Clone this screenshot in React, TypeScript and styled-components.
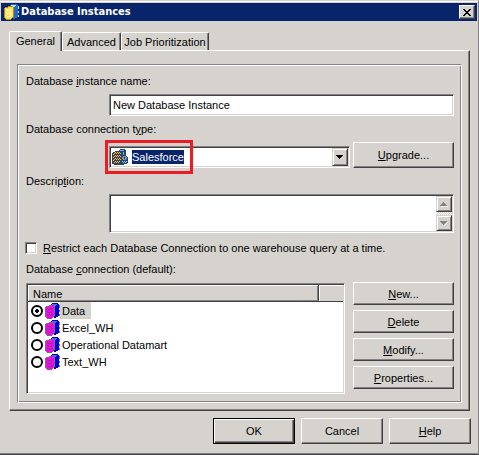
import React, { useState } from "react";
import styled, { createGlobalStyle, css } from "styled-components";

const face = "#d6d3ce";
const grey = "#848284";
const dark = "#424142";
const navy = "#08246b";

const GlobalStyle = createGlobalStyle`
  *, *::before, *::after { box-sizing: border-box; }
  body { margin: 0; background: ${face}; }
  body, button, input, select, textarea {
    font-family: "Liberation Sans", Arial, sans-serif;
    font-size: 11px;
    line-height: 16px;
    color: #000;
  }
`;

const sunken = css`
  border: 1px solid;
  border-color: ${grey} #fff #fff ${grey};
  box-shadow: inset 1px 1px ${dark}, inset -1px -1px ${face};
`;

const raised = css`
  border: 1px solid;
  border-color: #fff ${dark} ${dark} #fff;
  box-shadow: inset -1px -1px ${grey};
  background: ${face};
`;

const Window = styled.main`
  min-height: 100vh;
  display: flex;
  flex-direction: column;
  background: ${face};
  border: solid;
  border-width: 1px 1px 1px 0;
  border-color: ${face} ${grey} ${dark} ${face};
  box-shadow: inset 0 1px #fff, inset 0 -1px ${grey};
  padding: 2px 1px 9px 1px;
`;

const TitleBar = styled.header`
  display: flex;
  align-items: center;
  gap: 2px;
  height: 18px;
  padding: 0 2px 0 3px;
  background: ${navy};
  color: #fff;
`;

const Title = styled.h1`
  flex: 1;
  margin: 0;
  font: bold 11px/16px "DejaVu Sans Condensed", "DejaVu Sans", sans-serif;
`;

const CloseButton = styled.button`
  ${raised}
  display: grid;
  place-items: center;
  width: 16px;
  height: 14px;
  padding: 0;
`;

const Body = styled.div`
  flex: 1;
  display: flex;
  flex-direction: column;
  padding: 10px 6px 0 8px;
`;

const TabStrip = styled.div`
  display: flex;
  align-items: flex-end;
  height: 19px;
`;

const Tab = styled.button<{ $active: boolean; $width: number }>`
  position: relative;
  width: ${(p) => p.$width}px;
  height: ${(p) => (p.$active ? 20 : 18)}px;
  margin-bottom: ${(p) => (p.$active ? -1 : 0)}px;
  z-index: ${(p) => (p.$active ? 1 : 0)};
  padding: ${(p) => (p.$active ? "0 0 2px" : "0")};
  background: ${face};
  border: solid;
  border-width: 1px 1px 0 1px;
  border-color: #fff ${dark} #fff #fff;
  border-radius: 2px 2px 0 0;
  box-shadow: inset -1px 0 ${grey};
  white-space: nowrap;
`;

const TabPanel = styled.section`
  margin-right: 1px;
  padding: 13px 7px 7px;
  border: 1px solid;
  border-color: #fff ${dark} ${dark} #fff;
  box-shadow: inset -1px -1px ${grey};
`;

const Group = styled.form`
  display: flex;
  flex-direction: column;
  gap: 5px;
  padding: 8px 7px 8px 8px;
  border: 1px solid;
  border-color: ${grey} #fff #fff ${grey};
  box-shadow: inset 1px 1px #fff, inset -1px -1px ${grey};
`;

const Label = styled.label`
  height: 16px;
  white-space: nowrap;
`;

const Indented = styled.div`
  display: flex;
  align-items: flex-end;
  gap: 3px;
  padding-left: 83px;
`;

const TextInput = styled.input`
  ${sunken}
  flex: 1;
  min-width: 0;
  height: 22px;
  padding: 0 3px;
  outline: none;
`;

const Combo = styled.div`
  ${sunken}
  position: relative;
  flex: 1;
  display: flex;
  align-items: center;
  gap: 3px;
  height: 22px;
  padding: 1px 1px 1px 2px;
  background: #fff;
`;

const ComboSelect = styled.select`
  appearance: none;
  field-sizing: content;
  height: 14px;
  padding: 0;
  border: 0;
  border-radius: 0;
  outline: none;
  background: ${navy};
  color: #fff;
  line-height: 14px;
`;

const ArrowBox = styled.span`
  ${raised}
  display: grid;
  place-items: center;
  width: 16px;
  height: 18px;
  margin-left: auto;
  border-color: ${face} ${dark} ${dark} ${face};
  box-shadow: inset 1px 1px #fff, inset -1px -1px ${grey};
`;

const Highlight = styled.div`
  position: absolute;
  left: -5px;
  top: -7px;
  width: 88px;
  height: 34px;
  border: 3px solid #ed1c24;
  pointer-events: none;
`;

const Button = styled.button<{ $tall?: boolean; $default?: boolean }>`
  ${raised}
  width: ${(p) => (p.$default !== undefined ? 82 : 101)}px;
  height: ${(p) => (p.$tall ? 26 : 23)}px;
  padding: 0;
  ${(p) =>
    p.$default &&
    css`
      border-color: #000;
      box-shadow: inset 1px 1px #fff, inset -1px -1px ${dark}, inset -2px -2px ${grey};
    `}
`;

const Memo = styled.div`
  ${sunken}
  flex: 1;
  display: flex;
  height: 39px;
  padding: 1px;
  background: #fff;
`;

const MemoText = styled.textarea`
  flex: 1;
  min-width: 0;
  padding: 1px 2px;
  border: 0;
  outline: none;
  resize: none;
  overflow: hidden;
  background: transparent;
`;

const ScrollTrack = styled.div`
  display: flex;
  flex-direction: column;
  justify-content: space-between;
  width: 16px;
  background: repeating-conic-gradient(#fff 0 25%, ${face} 0 50%) 0 0 / 2px 2px;
`;

const ScrollButton = styled.button`
  ${raised}
  display: grid;
  place-items: center;
  width: 16px;
  height: 16px;
  padding: 0;
  border-color: ${face} ${dark} ${dark} ${face};
  box-shadow: inset 1px 1px #fff, inset -1px -1px ${grey};
`;

const CheckRow = styled.div`
  display: flex;
  align-items: center;
  gap: 6px;
  height: 16px;
  margin: 2px 0 0 -1px;
`;

const CheckBox = styled.input`
  ${sunken}
  appearance: none;
  width: 12px;
  height: 12px;
  margin: 0;
  background: #fff;
  &:checked {
    background: radial-gradient(#000 3px, #fff 3px);
  }
`;

const ListRow = styled.div`
  display: flex;
  gap: 8px;
`;

const ListFrame = styled.div`
  ${sunken}
  flex: 1;
  height: 111px;
  margin-top: 1px;
  padding: 1px;
  background: #fff;
`;

const List = styled.table`
  width: 100%;
  border-collapse: separate;
  border-spacing: 0;
  table-layout: fixed;
`;

const HeadCell = styled.th<{ $width?: number }>`
  width: ${(p) => (p.$width ? p.$width + "px" : "auto")};
  height: 17px;
  padding: 1px 0 0 5px;
  background: ${face};
  box-shadow: ${(p) =>
    p.$width
      ? `inset 0 -1px ${dark}, inset 1px 1px #fff`
      : `inset -1px -1px ${dark}, inset 1px 1px #fff, inset -2px -2px ${grey}`};
  font-weight: normal;
  text-align: left;
`;

const Cell = styled.td`
  height: 17px;
  padding: 0;
`;

const Item = styled.div`
  display: flex;
  align-items: center;
  height: 17px;
  padding-left: 3px;
`;

const Radio = styled.input`
  appearance: none;
  width: 12px;
  height: 12px;
  margin: 0 2px 0 0;
  border: 2px solid #000;
  border-radius: 50%;
  background: #fff;
  &:checked {
    background: radial-gradient(circle, #000 2px, #fff 2px);
  }
`;

const ItemLabel = styled.label<{ $selected: boolean }>`
  height: 17px;
  padding: 1px 6px 0 2px;
  background: ${(p) => (p.$selected ? face : "transparent")};
`;

const SideButtons = styled.div`
  display: flex;
  flex-direction: column;
  gap: 5px;
`;

const Footer = styled.footer`
  display: flex;
  justify-content: flex-end;
  gap: 6px;
  padding-top: 7px;
`;

function Cylinders(p: { front: string; shade: string; stripe: string; back: string; backLight: string }) {
  return (
    <svg width="15" height="16" viewBox="0 0 15 16" shapeRendering="crispEdges" aria-hidden="true">
      <path d="M6 1h1V0h6v1h1v12h-1v1h-2v1H9V3H6z" fill={p.back} />
      <path d="M7 1h5v1h-1v1H7z" fill={p.backLight} />
      <path d="M14 2h1v3h-1zM14 7h1v2h-1zM14 11h1v2h-1z" fill={p.backLight} />
      <path d="M0 4h1V3h3V2h5v1h1v10H9v1H8v1H7v1H2v-1H1v-1H0z" fill={p.shade} />
      <path d="M1 4h3V3h5v10H8v1H7v1H2v-1H1z" fill={p.front} />
      <path
        d="M2 5h1v1h3V5h2v1H7v1H3V6H2zM2 8h1v1h3V8h2v1H7v1H3V9H2zM2 11h1v1h3v-1h2v1H7v1H3v-1H2z"
        fill={p.stripe}
      />
    </svg>
  );
}

function ComboIcon() {
  return (
    <svg width="17" height="16" viewBox="0 0 17 16" shapeRendering="crispEdges" aria-hidden="true">
      <path d="M7 1h1V0h5v1h1v6h1v1h1v6h-1v1h-3v1H7z" fill="#21496b" />
      <path d="M8 1h4v1H8zM11 3h1v3h-1z" fill="#6badde" />
      <path d="M0 4h1V3h2V2h5v1h1v1h1v10H9v1H7v1H2v-1H0z" fill="#39415a" />
      <path
        d="M3 3h1v1H3zM5 3h1v1H5zM7 3h1v1H7zM2 4h1v1H2zM4 4h1v1H4zM6 4h1v1H6zM8 4h1v1H8zM1 5h1v1H1zM3 6h1v1H3zM5 6h1v1H5zM7 6h1v1H7zM2 7h1v1H2zM4 7h1v1H4zM6 7h1v1H6zM8 7h1v1H8zM1 8h1v1H1zM3 9h1v1H3zM5 9h1v1H5zM7 9h1v1H7zM2 10h1v1H2zM4 10h1v1H4zM6 10h1v1H6zM8 10h1v1H8zM1 11h1v1H1zM3 12h1v1H3zM5 12h1v1H5zM7 12h1v1H7zM2 13h1v1H2zM4 13h1v1H4zM6 13h1v1H6z"
        fill="#ffbe42"
      />
      <path d="M11 7h3v1h1v2h-1v1h-3v-1h-1V8h1z" fill="#7b9abd" />
      <path d="M10 12h1v1h-1zM12 12h1v1h-1zM14 12h1v1h-1zM11 13h1v1h-1zM13 13h1v1h-1z" fill="#a5c3e7" />
      <path d="M12 8h1v2h-1z" fill="#18315a" />
    </svg>
  );
}

const Arrow = ({ up, color = "#000", etched }: { up?: boolean; color?: string; etched?: boolean }) => (
  <svg width="8" height="5" viewBox="0 0 8 5" shapeRendering="crispEdges" aria-hidden="true">
    {etched && <path d={up ? "M1 4h7v1H1z" : "M7 1h1v1H7zM6 2h1v1H6zM5 3h1v1H5zM4 4h1v1H4z"} fill="#fff" />}
    <path d={up ? "M3 0h1v1h1v1h1v1h1v1H0V3h1V2h1V1h1z" : "M0 0h7v1H6v1H5v1H4v1H3V3H2V2H1V1H0z"} fill={color} />
  </svg>
);

const connections = ["Data", "Excel_WH", "Operational Datamart", "Text_WH"];
const tabs = [
  { name: "General", width: 53 },
  { name: "Advanced", width: 59 },
  { name: "Job Prioritization", width: 88 },
];

export default function App() {
  const [tab, setTab] = useState("General");
  const [selected, setSelected] = useState("Data");
  return (
    <>
      <GlobalStyle />
      <Window>
        <TitleBar>
          <Cylinders front="#ffdf4a" shade="#b58a21" stripe="#fffbd6" back="#2169c6" backLight="#b5e3ff" />
          <Title>Database Instances</Title>
          <CloseButton aria-label="Close">
            <svg width="8" height="7" viewBox="0 0 8 7" shapeRendering="crispEdges" aria-hidden="true">
              <path d="M0 0h2v1h1v1h2V1h1V0h2v1H7v1H6v1H5v1h1v1h1v1h1v1H6V6H5V5H3v1H2v1H0V6h1V5h1V4h1V3H2V2H1V1H0z" />
            </svg>
          </CloseButton>
        </TitleBar>
        <Body>
          <TabStrip role="tablist">
            {tabs.map((t) => (
              <Tab
                key={t.name}
                role="tab"
                aria-selected={tab === t.name}
                $active={tab === t.name}
                $width={t.width}
                onClick={() => setTab(t.name)}
              >
                {t.name}
              </Tab>
            ))}
          </TabStrip>
          <TabPanel role="tabpanel">
            <Group onSubmit={(e) => e.preventDefault()}>
              <Label htmlFor="name">Database <u>i</u>nstance name:</Label>
              <Indented>
                <TextInput id="name" defaultValue="New Database Instance" />
              </Indented>
              <Label htmlFor="type">Database connection t<u>y</u>pe:</Label>
              <Indented>
                <Combo>
                  <ComboIcon />
                  <ComboSelect id="type">
                    <option>Salesforce</option>
                  </ComboSelect>
                  <ArrowBox>
                    <Arrow />
                  </ArrowBox>
                  <Highlight />
                </Combo>
                <Button type="button" $tall><u>U</u>pgrade...</Button>
              </Indented>
              <Label htmlFor="description">Descrip<u>t</u>ion:</Label>
              <Indented>
                <Memo>
                  <MemoText id="description" />
                  <ScrollTrack>
                    <ScrollButton type="button" aria-label="Scroll up"><Arrow up etched color={grey} /></ScrollButton>
                    <ScrollButton type="button" aria-label="Scroll down"><Arrow etched color={grey} /></ScrollButton>
                  </ScrollTrack>
                </Memo>
              </Indented>
              <CheckRow>
                <CheckBox type="checkbox" id="restrict" />
                <Label htmlFor="restrict">
                  <u>R</u>estrict each Database Connection to one warehouse query at a time.
                </Label>
              </CheckRow>
              <Label as="div" id="connections">Database <u>c</u>onnection (default):</Label>
              <ListRow>
                <ListFrame>
                  <List aria-labelledby="connections">
                    <thead>
                      <tr>
                        <HeadCell>Name</HeadCell>
                        <HeadCell $width={24} as="td" />
                      </tr>
                    </thead>
                    <tbody>
                      {connections.map((c) => (
                        <tr key={c}>
                          <Cell colSpan={2}>
                            <Item>
                              <Radio
                                type="radio"
                                name="connection"
                                id={c}
                                checked={selected === c}
                                onChange={() => setSelected(c)}
                              />
                              <Cylinders front="#ff00ff" shade="#7b697b" stripe="#73496b" back="#0000d6" backLight="#4a69f7" />
                              <ItemLabel htmlFor={c} $selected={selected === c}>{c}</ItemLabel>
                            </Item>
                          </Cell>
                        </tr>
                      ))}
                    </tbody>
                  </List>
                </ListFrame>
                <SideButtons>
                  <Button type="button"><u>N</u>ew...</Button>
                  <Button type="button"><u>D</u>elete</Button>
                  <Button type="button"><u>M</u>odify...</Button>
                  <Button type="button"><u>P</u>roperties...</Button>
                </SideButtons>
              </ListRow>
            </Group>
          </TabPanel>
          <Footer>
            <Button $tall $default>OK</Button>
            <Button $tall $default={false}>Cancel</Button>
            <Button $tall $default={false}><u>H</u>elp</Button>
          </Footer>
        </Body>
      </Window>
    </>
  );
}
